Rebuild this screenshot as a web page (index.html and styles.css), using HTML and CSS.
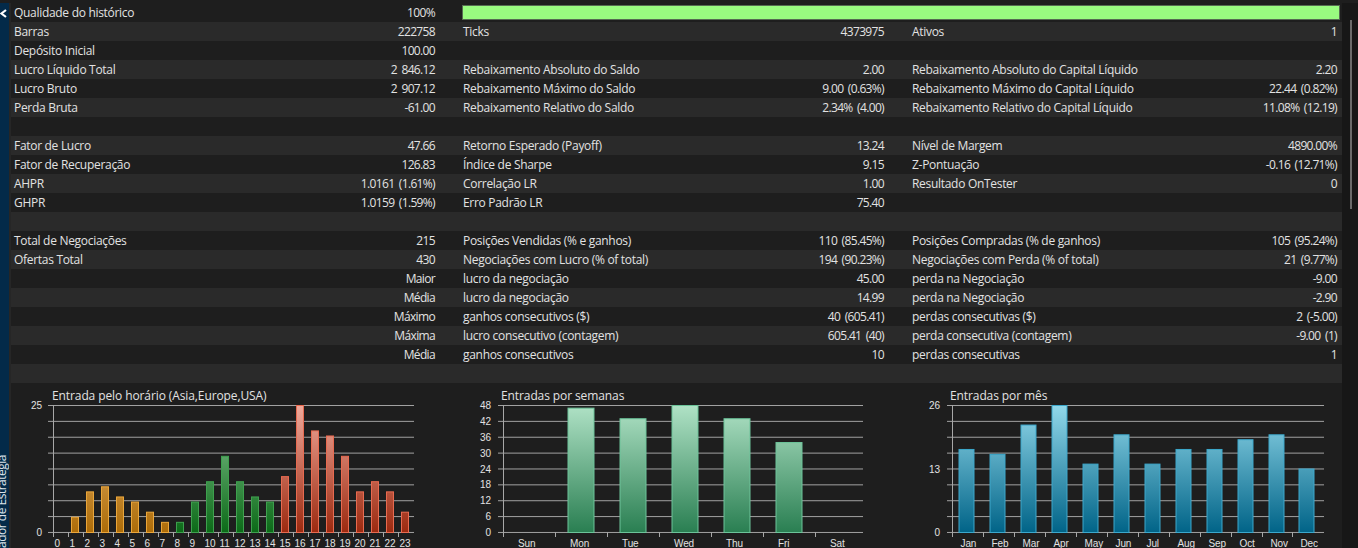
FILE: index.html
```html
<!DOCTYPE html>
<html>
    <head>
        <title>Relatório</title>
        <link rel="stylesheet" href="styles.css">
    </head>
    <body>
        <div class="side">
            <svg class="close" width="8" height="9" viewBox="0 0 8 9"><polyline points="6,1 1.5,4.5 6,8"></polyline></svg>
            <span class="side_title">Testador de Estratégia</span>
        </div>
        <div class="report">
            <div class="row">
                <div class="cell"><span>Qualidade do histórico</span><span>100%</span></div>
                <div class="quality"><div class="quality_fill"></div></div>
            </div>
            <div class="row">
                <div class="cell"><span>Barras</span><span>222758</span></div>
                <div class="cell"><span>Ticks</span><span>4373975</span></div>
                <div class="cell"><span>Ativos</span><span>1</span></div>
            </div>
            <div class="row">
                <div class="cell"><span>Depósito Inicial</span><span>100.00</span></div>
            </div>
            <div class="row">
                <div class="cell"><span>Lucro Líquido Total</span><span>2 846.12</span></div>
                <div class="cell"><span>Rebaixamento Absoluto do Saldo</span><span>2.00</span></div>
                <div class="cell"><span>Rebaixamento Absoluto do Capital Líquido</span><span>2.20</span></div>
            </div>
            <div class="row">
                <div class="cell"><span>Lucro Bruto</span><span>2 907.12</span></div>
                <div class="cell"><span>Rebaixamento Máximo do Saldo</span><span>9.00 (0.63%)</span></div>
                <div class="cell"><span>Rebaixamento Máximo do Capital Líquido</span><span>22.44 (0.82%)</span></div>
            </div>
            <div class="row">
                <div class="cell"><span>Perda Bruta</span><span>-61.00</span></div>
                <div class="cell"><span>Rebaixamento Relativo do Saldo</span><span>2.34% (4.00)</span></div>
                <div class="cell"><span>Rebaixamento Relativo do Capital Líquido</span><span>11.08% (12.19)</span></div>
            </div>
            <div class="row"></div>
            <div class="row">
                <div class="cell"><span>Fator de Lucro</span><span>47.66</span></div>
                <div class="cell"><span>Retorno Esperado (Payoff)</span><span>13.24</span></div>
                <div class="cell"><span>Nível de Margem</span><span>4890.00%</span></div>
            </div>
            <div class="row">
                <div class="cell"><span>Fator de Recuperação</span><span>126.83</span></div>
                <div class="cell"><span>Índice de Sharpe</span><span>9.15</span></div>
                <div class="cell"><span>Z-Pontuação</span><span>-0.16 (12.71%)</span></div>
            </div>
            <div class="row">
                <div class="cell"><span>AHPR</span><span>1.0161 (1.61%)</span></div>
                <div class="cell"><span>Correlação LR</span><span>1.00</span></div>
                <div class="cell"><span>Resultado OnTester</span><span>0</span></div>
            </div>
            <div class="row">
                <div class="cell"><span>GHPR</span><span>1.0159 (1.59%)</span></div>
                <div class="cell"><span>Erro Padrão LR</span><span>75.40</span></div>
            </div>
            <div class="row"></div>
            <div class="row">
                <div class="cell"><span>Total de Negociações</span><span>215</span></div>
                <div class="cell"><span>Posições Vendidas (% e ganhos)</span><span>110 (85.45%)</span></div>
                <div class="cell"><span>Posições Compradas (% de ganhos)</span><span>105 (95.24%)</span></div>
            </div>
            <div class="row">
                <div class="cell"><span>Ofertas Total</span><span>430</span></div>
                <div class="cell"><span>Negociações com Lucro (% of total)</span><span>194 (90.23%)</span></div>
                <div class="cell"><span>Negociações com Perda (% of total)</span><span>21 (9.77%)</span></div>
            </div>
            <div class="row">
                <div class="cell"><span></span><span>Maior</span></div>
                <div class="cell"><span>lucro da negociação</span><span>45.00</span></div>
                <div class="cell"><span>perda na Negociação</span><span>-9.00</span></div>
            </div>
            <div class="row">
                <div class="cell"><span></span><span>Média</span></div>
                <div class="cell"><span>lucro da negociação</span><span>14.99</span></div>
                <div class="cell"><span>perda na Negociação</span><span>-2.90</span></div>
            </div>
            <div class="row">
                <div class="cell"><span></span><span>Máximo</span></div>
                <div class="cell"><span>ganhos consecutivos ($)</span><span>40 (605.41)</span></div>
                <div class="cell"><span>perdas consecutivas ($)</span><span>2 (-5.00)</span></div>
            </div>
            <div class="row">
                <div class="cell"><span></span><span>Máxima</span></div>
                <div class="cell"><span>lucro consecutivo (contagem)</span><span>605.41 (40)</span></div>
                <div class="cell"><span>perda consecutiva (contagem)</span><span>-9.00 (1)</span></div>
            </div>
            <div class="row">
                <div class="cell"><span></span><span>Média</span></div>
                <div class="cell"><span>ganhos consecutivos</span><span>10</span></div>
                <div class="cell"><span>perdas consecutivas</span><span>1</span></div>
            </div>
            <div class="row"></div>
            <div class="charts">
                <svg class="chart" id="hours" width="449" height="165"></svg>
                <svg class="chart" id="weeks" width="449" height="165"></svg>
                <svg class="chart" id="months" width="433" height="165"></svg>
            </div>
        </div>
        <div class="gutter"><div class="thumb"></div></div>
        <script src="charts.js"></script>
    </body>
</html>
```

FILE: styles.css
```css
*{
margin: 0;
padding: 0;
box-sizing: border-box;
}
html, body{
height: 100%;
overflow: hidden;
}
body{
display: flex;
background: #1e1e1e;
border-top: 3px solid #1e1e1e;
font-family: "Open Sans", "Noto Sans", sans-serif;
font-size: 12px;
letter-spacing: -0.3px;
color: #e2e2e2;
position: relative;
}
body::before{
content: "";
position: absolute;
left: 0;
right: 0;
top: -1px;
height: 1px;
background: #9a9a9a;
}
.side{
width: 11px;
flex: none;
background: #032a49;
border-right: 2px solid #262626;
position: relative;
overflow: hidden;
}
.close{
position: absolute;
left: 0;
top: 6px;
}
.close polyline{
fill: none;
stroke: #fff;
stroke-width: 2.2;
}
.side_title{
position: absolute;
left: -5px;
top: 452px;
writing-mode: vertical-rl;
transform: rotate(180deg);
white-space: nowrap;
color: #dbe3ea;
line-height: 14px;
letter-spacing: -0.5px;
}
.report{
width: 1331px;
flex: none;
}
.row{
display: grid;
grid-template-columns: 449px 449px 433px;
height: 19px;
line-height: 19px;
background: #1e1e1e;
}
.row:nth-child(even){
background: #2a2a2a;
}
.cell{
display: flex;
justify-content: space-between;
padding: 0 25px 0 3px;
white-space: nowrap;
}
.cell span:last-child{
letter-spacing: -0.65px;
word-spacing: 2px;
}
.cell:nth-child(3){
padding-right: 5px;
}
.quality{
grid-column: 2 / 4;
margin: 2px 2px 2px 2px;
border: 1px solid #566b52;
background: #99fb80;
}
.quality_fill{
height: 100%;
}
.charts{
display: flex;
height: 165px;
}
.chart{
flex: none;
display: block;
}
.chart text{
font-family: "Liberation Sans", sans-serif;
font-size: 10px;
letter-spacing: -0.1px;
fill: #e2e2e2;
}
.chart .title{
font-family: "Open Sans", sans-serif;
font-size: 12px;
letter-spacing: -0.1px;
}
.chart .grid{
stroke: #a2a2a2;
stroke-width: 1;
}
.chart .axis{
stroke: #a8a8a8;
stroke-width: 1;
}
.gutter{
flex: 1;
background: #171717;
padding: 17px 6px 0 8px;
}
.thumb{
width: 2px;
height: 189px;
background: #6a6a6a;
}
```

FILE: charts.js
```js
const NS = "http://www.w3.org/2000/svg";
const TOP = 22;
const BOTTOM = 149;
const STEP = 15.87;

const el = (parent, tag, attrs, text) => {
    const node = document.createElementNS(NS, tag);
    for(const key in attrs){
        node.setAttribute(key, attrs[key]);
    }
    if(text !== undefined){
        node.textContent = text;
    }
    parent.appendChild(node);
    return node;
};

const addGradient = (defs, id, from, to) => {
    const g = el(defs, "linearGradient", {id: id, gradientUnits: "userSpaceOnUse", x1: 0, y1: TOP, x2: 0, y2: BOTTOM});
    el(g, "stop", {offset: "0", "stop-color": from});
    el(g, "stop", {offset: "1", "stop-color": to});
};

const draw = (c) => {
    const svg = document.getElementById(c.id);
    const defs = el(svg, "defs", {});
    addGradient(defs, c.id + "_a", c.top, c.bottom);
    if(c.top2){
        addGradient(defs, c.id + "_b", c.top2, c.bottom2);
        addGradient(defs, c.id + "_c", c.top3, c.bottom3);
    }
    el(svg, "text", {class: "title", x: 41, y: 17}, c.title);

    // horizontal grid lines
    for(let i = 0; i <= 8; i++){
        const y = TOP + 0.5 + i * STEP;
        el(svg, "line", {class: "grid", x1: c.axis - 5, x2: c.right, y1: y, y2: y});
    }
    el(svg, "line", {class: "axis", x1: c.axis + 0.5, x2: c.axis + 0.5, y1: TOP, y2: BOTTOM + 5});

    // y labels
    c.ylabels.forEach(v => {
        const y = BOTTOM - (BOTTOM - TOP) * v / c.max;
        el(svg, "text", {x: c.axis - c.ygap, y: y + 4, "text-anchor": "end"}, v);
    });

    // x ticks, labels and bars
    c.values.forEach((v, i) => {
        const x = Math.round(c.axis + i * c.pitch);
        el(svg, "line", {class: "axis", x1: x + 0.5, x2: x + 0.5, y1: BOTTOM, y2: BOTTOM + 5});
        el(svg, "text", {x: x + c.labelx, y: BOTTOM + 15}, c.labels ? c.labels[i] : i);
        if(v === 0){
            return;
        }
        const h = (BOTTOM - TOP) * v / c.max;
        let suffix = "_a", stroke = c.stroke;
        if(c.top2 && i >= 8){
            suffix = i >= 15 ? "_c" : "_b";
            stroke = i >= 15 ? c.stroke3 : c.stroke2;
        }
        el(svg, "rect", {
            x: x + c.barx + 0.5,
            y: BOTTOM - h + 0.5,
            width: c.barw - 1,
            height: h,
            fill: `url(#${c.id}${suffix})`,
            stroke: stroke
        });
    });
};

draw({
    id: "hours", title: "Entrada pelo horário (Asia,Europe,USA)",
    axis: 42, right: 403, pitch: 15.02, barx: 3, barw: 8, labelx: 1.5, ygap: 11, max: 25, ylabels: [25, 0],
    values: [0, 3, 8, 9, 7, 6, 4, 2, 2, 6, 10, 15, 10, 7, 6, 11, 25, 20, 19, 15, 8, 10, 8, 4],
    top: "#f0c080", bottom: "#ad6c08", stroke: "#eaa63a",
    top2: "#8cc898", bottom2: "#0c6a18", stroke2: "#3ea04e",
    top3: "#f0aa9c", bottom3: "#9c2a10", stroke3: "#e86a50"
});
draw({
    id: "weeks", title: "Entradas por semanas",
    axis: 43, right: 403, pitch: 52, barx: 12.5, barw: 27, labelx: 15, ygap: 12, max: 48,
    ylabels: [48, 42, 36, 30, 24, 18, 12, 6, 0],
    values: [0, 47, 43, 48, 43, 34, 0],
    labels: ["Sun", "Mon", "Tue", "Wed", "Thu", "Fri", "Sat"],
    top: "#b0e2c6", bottom: "#2a7f52", stroke: "#6cc49a"
});
draw({
    id: "months", title: "Entradas por mês",
    axis: 43, right: 415, pitch: 30.95, barx: 6.5, barw: 16, labelx: 8.5, ygap: 12, max: 26, ylabels: [26, 13, 0],
    values: [17, 16, 22, 26, 14, 20, 14, 17, 17, 19, 20, 13],
    labels: ["Jan", "Feb", "Mar", "Apr", "May", "Jun", "Jul", "Aug", "Sep", "Oct", "Nov", "Dec"],
    top: "#92d8ea", bottom: "#016488", stroke: "#3ca8cc"
});
```
